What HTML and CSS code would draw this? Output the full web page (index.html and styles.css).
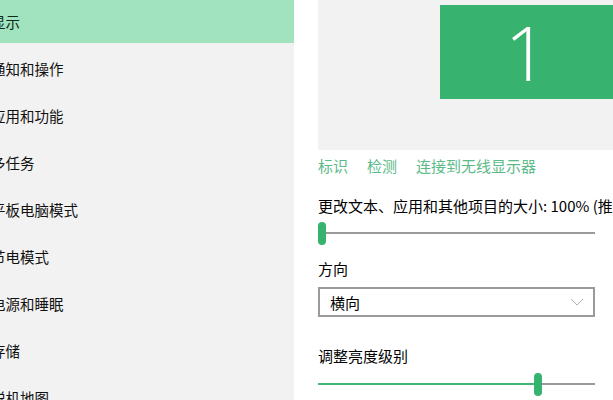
FILE: index.html
```html
<!DOCTYPE html>
<html lang="zh-CN">
<head>
<meta charset="utf-8">
<title>显示设置</title>
<link rel="stylesheet" href="styles.css">
</head>
<body>
<div class="page">
  <nav class="sidebar">
    <div class="nav-item selected">显示</div>
    <div class="nav-item first-plain">通知和操作</div>
    <div class="nav-item">应用和功能</div>
    <div class="nav-item">多任务</div>
    <div class="nav-item">平板电脑模式</div>
    <div class="nav-item">节电模式</div>
    <div class="nav-item">电源和睡眠</div>
    <div class="nav-item">存储</div>
    <div class="nav-item">脱机地图</div>
  </nav>
  <main class="main">
    <div class="preview">
      <div class="monitor">1</div>
    </div>
    <div class="links">
      <span class="link">标识</span>
      <span class="link">检测</span>
      <span class="link">连接到无线显示器</span>
    </div>
    <div class="label label-scale">更改文本、应用和其他项目的大小: 100% (推荐)</div>
    <div class="slider">
      <div class="track"></div>
      <div class="thumb" style="left: 0px"></div>
    </div>
    <div class="label label-orient">方向</div>
    <div class="select">
      <span>横向</span>
      <svg class="chevron" width="14" height="8" viewBox="0 0 14 8"><polyline points="1,1 7,7 13,1" fill="none" stroke="#b0b0b0" stroke-width="1"/></svg>
    </div>
    <div class="label label-bright">调整亮度级别</div>
    <div class="slider">
      <div class="track"></div>
      <div class="track-fill" style="width: 219px"></div>
      <div class="thumb" style="left: 216px"></div>
    </div>
  </main>
</div>
</body>
</html>
```
FILE: styles.css
```css
html, body {
  margin: 0;
  padding: 0;
  background: #ffffff;
  overflow: hidden;
}
body {
  font-family: "Noto Sans CJK SC", "Noto Sans", sans-serif;
  color: #000;
}
.page {
  display: flex;
  width: 613px;
  height: 400px;
  overflow: hidden;
}
.sidebar {
  width: 294px;
  flex: none;
  background: #f2f2f2;
  display: flex;
  flex-direction: column;
  overflow: hidden;
}
.nav-item {
  height: 47px;
  line-height: 47px;
  font-size: 14.5px;
  margin-left: -9px;
  white-space: nowrap;
  color: #111;
  flex: none;
}
.nav-item.selected {
  height: 43px;
  line-height: 44px;
  margin-left: 0;
  background: #a1e3bf;
  text-indent: -9px;
  color: #0f2a1c;
}
.nav-item.first-plain {
  margin-top: 2px;
}
.main {
  flex: 1;
  padding-left: 24px;
  overflow: hidden;
  white-space: nowrap;
}
.preview {
  height: 150px;
  background: #f2f2f2;
  padding: 5px 0 0 122px;
  box-sizing: border-box;
}
.monitor {
  height: 94px;
  background: #37b36f;
  color: #fff;
  display: flex;
  align-items: center;
  justify-content: center;
  font-family: "Open Sans", "Noto Sans", sans-serif;
  font-weight: 300;
  font-size: 76px;
  line-height: 1;
}
.links {
  height: 32px;
  line-height: 32px;
  font-size: 15px;
  display: flex;
  gap: 19px;
}
.link {
  color: #5cba88;
}
.label {
  font-size: 15px;
  line-height: 24px;
  height: 24px;
}
.label-scale { margin-top: 12px; }
.label-orient { margin-top: 12px; }
.label-bright { margin-top: 27px; }
.slider {
  position: relative;
  width: 277px;
  height: 24px;
  margin-top: 3px;
}
.label-bright + .slider { margin-top: 4px; }
.track {
  position: absolute;
  left: 0;
  right: 0;
  top: 11px;
  height: 2px;
  background: #9a9a9a;
}
.track-fill {
  position: absolute;
  left: 0;
  top: 11px;
  height: 2px;
  background: #3fb777;
}
.thumb {
  position: absolute;
  top: 1px;
  width: 8px;
  height: 23px;
  border-radius: 4px;
  background: #35b36f;
}
.select {
  margin-top: 6px;
  width: 277px;
  height: 30px;
  box-sizing: border-box;
  border: 2px solid #9a9a9a;
  display: flex;
  align-items: center;
  justify-content: space-between;
  padding: 0 9px 0 10px;
  font-size: 15px;
}
.chevron {
  display: block;
}
```
